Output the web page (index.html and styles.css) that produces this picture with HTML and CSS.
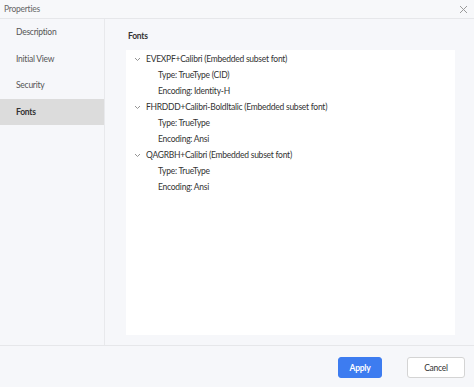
FILE: index.html
```html
<!DOCTYPE html>
<html>
<head>
<meta charset="utf-8">
<link rel="stylesheet" href="styles.css">
</head>
<body>
<div class="dialog">
  <div class="titlebar">
    <span class="title">Properties</span>
    <svg class="close" width="9" height="9" viewBox="0 0 9 9"><path d="M1 1L8 8M8 1L1 8" stroke="#9a9a9a" stroke-width="1"/></svg>
  </div>
  <div class="body">
    <nav class="sidebar">
      <div class="nav-item">Description</div>
      <div class="nav-item">Initial View</div>
      <div class="nav-item">Security</div>
      <div class="nav-item active">Fonts</div>
    </nav>
    <main class="main">
      <div class="heading">Fonts</div>
      <div class="panel">
        <div class="row parent"><svg class="chev" width="7" height="5" viewBox="0 0 7 5"><path d="M1 1L3.5 3.5L6 1" fill="none" stroke="#888" stroke-width="0.9"/></svg>EVEXPF+Calibri (Embedded subset font)</div>
        <div class="row child">Type: TrueType (CID)</div>
        <div class="row child">Encoding: Identity-H</div>
        <div class="row parent"><svg class="chev" width="7" height="5" viewBox="0 0 7 5"><path d="M1 1L3.5 3.5L6 1" fill="none" stroke="#888" stroke-width="0.9"/></svg>FHRDDD+Calibri-BoldItalic (Embedded subset font)</div>
        <div class="row child">Type: TrueType</div>
        <div class="row child">Encoding: Ansi</div>
        <div class="row parent"><svg class="chev" width="7" height="5" viewBox="0 0 7 5"><path d="M1 1L3.5 3.5L6 1" fill="none" stroke="#888" stroke-width="0.9"/></svg>QAGRBH+Calibri (Embedded subset font)</div>
        <div class="row child">Type: TrueType</div>
        <div class="row child">Encoding: Ansi</div>
      </div>
    </main>
  </div>
  <div class="footer">
    <button class="btn primary">Apply</button>
    <button class="btn">Cancel</button>
  </div>
</div>
</body>
</html>
```
FILE: styles.css
```css
* { box-sizing: border-box; }
html, body { margin: 0; padding: 0; }
body {
  width: 474px;
  height: 387px;
  overflow: hidden;
  font-family: Lato, "Noto Sans", sans-serif;
  letter-spacing: -0.25px;
  background: #f6f7fa;
  color: #333;
}
.dialog {
  display: flex;
  flex-direction: column;
  height: 387px;
}
.titlebar {
  height: 19px;
  display: flex;
  align-items: center;
  justify-content: space-between;
  padding: 0 6px 0 4px;
  border-bottom: 1px solid #e6e7ea;
  background: #f7f8fa;
}
.title {
  font-size: 8.5px;
  color: #666;
}
.body {
  display: flex;
  height: 327px;
  border-bottom: 1px solid #e6e7ea;
}
.sidebar {
  width: 105px;
  border-right: 1px solid #e8e9ec;
  background: #f6f7fa;
  display: flex;
  flex-direction: column;
}
.nav-item {
  height: 26.5px;
  display: flex;
  align-items: center;
  padding-left: 16px;
  font-size: 8.5px;
  color: #555;
}
.nav-item.active {
  background: #dcdcdc;
  color: #333;
  font-weight: 700;
}
.main {
  flex: 1;
  display: flex;
  flex-direction: column;
  padding: 10px 19px 10px 21px;
}
.heading {
  font-size: 8.5px;
  font-weight: 700;
  color: #333;
  height: 14px;
  line-height: 14px;
  margin-left: 2px;
  margin-bottom: 7px;
}
.panel {
  flex: 1;
  background: #fff;
  padding-top: 1px;
}
.row {
  height: 16px;
  display: flex;
  align-items: center;
  font-size: 8.5px;
  color: #333;
  white-space: nowrap;
}
.parent { padding-left: 8px; }
.chev { margin-right: 5px; }
.child { padding-left: 32px; }
.footer {
  flex: 1;
  display: flex;
  justify-content: flex-end;
  align-items: center;
  gap: 25px;
  padding: 2px 9px 0 0;
}
.btn {
  font-family: Lato, "Noto Sans", sans-serif;
  letter-spacing: -0.25px;
  font-size: 8.5px;
  height: 21px;
  border-radius: 3px;
  border: 1px solid #d4d4d4;
  background: #fff;
  color: #333;
  width: 58px;
  padding: 0;
}
.btn.primary {
  width: 44px;
  background: #3d7cf0;
  border-color: #3d7cf0;
  color: #fff;
  font-weight: 700;
}
```
